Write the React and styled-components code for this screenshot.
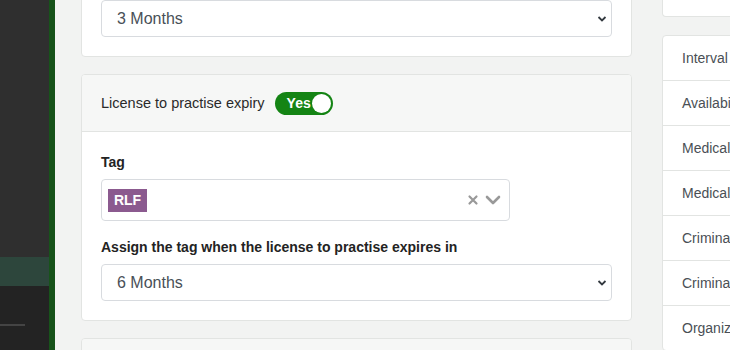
import React from 'react';
import styled, { createGlobalStyle } from 'styled-components';

const GlobalStyle = createGlobalStyle`
    html, body {
        margin: 0;
        padding: 0;
        background: #f2f3f2;
    }
    body {
        font-family: "Liberation Sans", Arial, sans-serif;
        color: #212529;
    }
`;

const rightItems = [
    "Interval",
    "Availability",
    "Medical checks",
    "Medical registration",
    "Criminal record",
    "Criminal record check",
    "Organization",
];

export default function App() {
    return (
        <>
            <GlobalStyle />
            <Page>
                <Sidebar>
                    <SideTop />
                    <SideActive />
                    <SideBottom>
                        <SideRule />
                    </SideBottom>
                </Sidebar>
                <Main>
                    <LeftColumn>
                        <Card>
                            <CardBody>
                                <Select value="3" onChange={() => {}}>
                                    <option value="3">3 Months</option>
                                </Select>
                            </CardBody>
                        </Card>

                        <Card>
                            <CardHeader>
                                <HeaderText>License to practise expiry</HeaderText>
                                <Toggle>
                                    <ToggleText>Yes</ToggleText>
                                    <Knob />
                                </Toggle>
                            </CardHeader>
                            <CardBody>
                                <Label>Tag</Label>
                                <TagSelect>
                                    <Chip>RLF</Chip>
                                    <Indicators>
                                        <svg width="12" height="12" viewBox="0 0 12 12">
                                            <path d="M2.5 2.5 L9.5 9.5 M9.5 2.5 L2.5 9.5" stroke="#999" strokeWidth="2.2" strokeLinecap="round" />
                                        </svg>
                                        <svg width="16" height="12" viewBox="0 0 16 12">
                                            <path d="M2 3 L8 9 L14 3" stroke="#999" strokeWidth="2.6" fill="none" strokeLinecap="round" strokeLinejoin="round" />
                                        </svg>
                                    </Indicators>
                                </TagSelect>
                                <Label spaced>Assign the tag when the license to practise expires in</Label>
                                <Select value="6" onChange={() => {}}>
                                    <option value="6">6 Months</option>
                                </Select>
                            </CardBody>
                        </Card>

                        <Card>
                            <CardHeader />
                        </Card>
                    </LeftColumn>

                    <RightColumn>
                        <SmallCard />
                        <ListGroup>
                            {rightItems.map((item) => (
                                <ListItem key={item}>{item}</ListItem>
                            ))}
                        </ListGroup>
                    </RightColumn>
                </Main>
            </Page>
        </>
    );
}

const Page = styled.div`
    display: flex;
    width: 730px;
    height: 350px;
    overflow: hidden;
`;

const Sidebar = styled.div`
    flex: 0 0 49px;
    display: flex;
    flex-direction: column;
    border-right: 6px solid #17531a;
`;

const SideTop = styled.div`
    height: 257px;
    background: #2f2f2f;
`;

const SideActive = styled.div`
    height: 29px;
    background: #2d463c;
`;

const SideBottom = styled.div`
    flex: 1;
    background: #232323;
    padding-top: 38px;
`;

const SideRule = styled.div`
    width: 25px;
    height: 2px;
    background: #444;
`;

const Main = styled.div`
    flex: 1;
    display: flex;
    gap: 30px;
    padding-left: 26px;
    align-items: flex-start;
`;

const LeftColumn = styled.div`
    flex: 0 0 551px;
    display: flex;
    flex-direction: column;
    gap: 17px;
    margin-top: -21px;
`;

const Card = styled.div`
    background: #fff;
    border: 1px solid #e2e4e2;
    border-radius: 4px;
    overflow: hidden;
`;

const CardHeader = styled.div`
    display: flex;
    align-items: center;
    gap: 10px;
    height: 56px;
    padding: 0 19px;
    background: #f6f7f6;
    border-bottom: 1px solid #e2e4e2;
`;

const HeaderText = styled.span`
    font-size: 14.5px;
    color: #2a2a2a;
`;

const Toggle = styled.div`
    display: flex;
    align-items: center;
    justify-content: space-between;
    width: 58px;
    height: 23px;
    box-sizing: border-box;
    padding: 0 2px 0 12px;
    border-radius: 12px;
    background: #148414;
`;

const ToggleText = styled.span`
    color: #fff;
    font-weight: 700;
    font-size: 14px;
`;

const Knob = styled.span`
    width: 19px;
    height: 19px;
    border-radius: 50%;
    background: #fff;
`;

const CardBody = styled.div`
    padding: 20px 19px 19px;
    display: flex;
    flex-direction: column;
    align-items: flex-start;
`;

const Label = styled.div`
    font-size: 14px;
    font-weight: 700;
    color: #232323;
    margin-top: ${(p) => (p.spaced ? '18px' : '2px')};
    margin-bottom: 9px;
`;

const Select = styled.select`
    appearance: none;
    width: 511px;
    height: 37px;
    padding: 0 15px;
    border: 1px solid #d8dbdf;
    border-radius: 4px;
    background-color: #fff;
    background-image: url("data:image/svg+xml,%3Csvg xmlns='http://www.w3.org/2000/svg' width='10' height='8' viewBox='0 0 10 8'%3E%3Cpath d='M1.5 2 L5 5.5 L8.5 2' stroke='%23343a40' stroke-width='1.8' fill='none'/%3E%3C/svg%3E");
    background-repeat: no-repeat;
    background-position: right 4px center;
    font-family: "Liberation Sans", Arial, sans-serif;
    font-size: 16px;
    color: #495057;
`;

const TagSelect = styled.div`
    display: flex;
    align-items: center;
    justify-content: space-between;
    width: 409px;
    height: 42px;
    box-sizing: border-box;
    padding: 0 8px 0 6px;
    border: 1px solid #d8dbdf;
    border-radius: 4px;
`;

const Chip = styled.span`
    display: flex;
    align-items: center;
    justify-content: center;
    width: 39px;
    height: 23px;
    background: #8b5a8f;
    color: #fff;
    font-size: 14px;
    font-weight: 700;
`;

const Indicators = styled.div`
    display: flex;
    align-items: center;
    gap: 6px;
`;

const RightColumn = styled.div`
    flex: 0 0 200px;
    display: flex;
    flex-direction: column;
    gap: 18px;
`;

const SmallCard = styled.div`
    height: 16px;
    background: #fff;
    border: 1px solid #e2e4e2;
    border-top: none;
    border-radius: 0 0 4px 4px;
`;

const ListGroup = styled.div`
    background: #fff;
    border: 1px solid #e2e4e2;
    border-radius: 4px;
`;

const ListItem = styled.div`
    height: 44px;
    display: flex;
    align-items: center;
    padding: 0 19px;
    font-size: 14px;
    color: #4a4f55;
    white-space: nowrap;
    & + & {
        border-top: 1px solid #e2e4e2;
    }
`;
